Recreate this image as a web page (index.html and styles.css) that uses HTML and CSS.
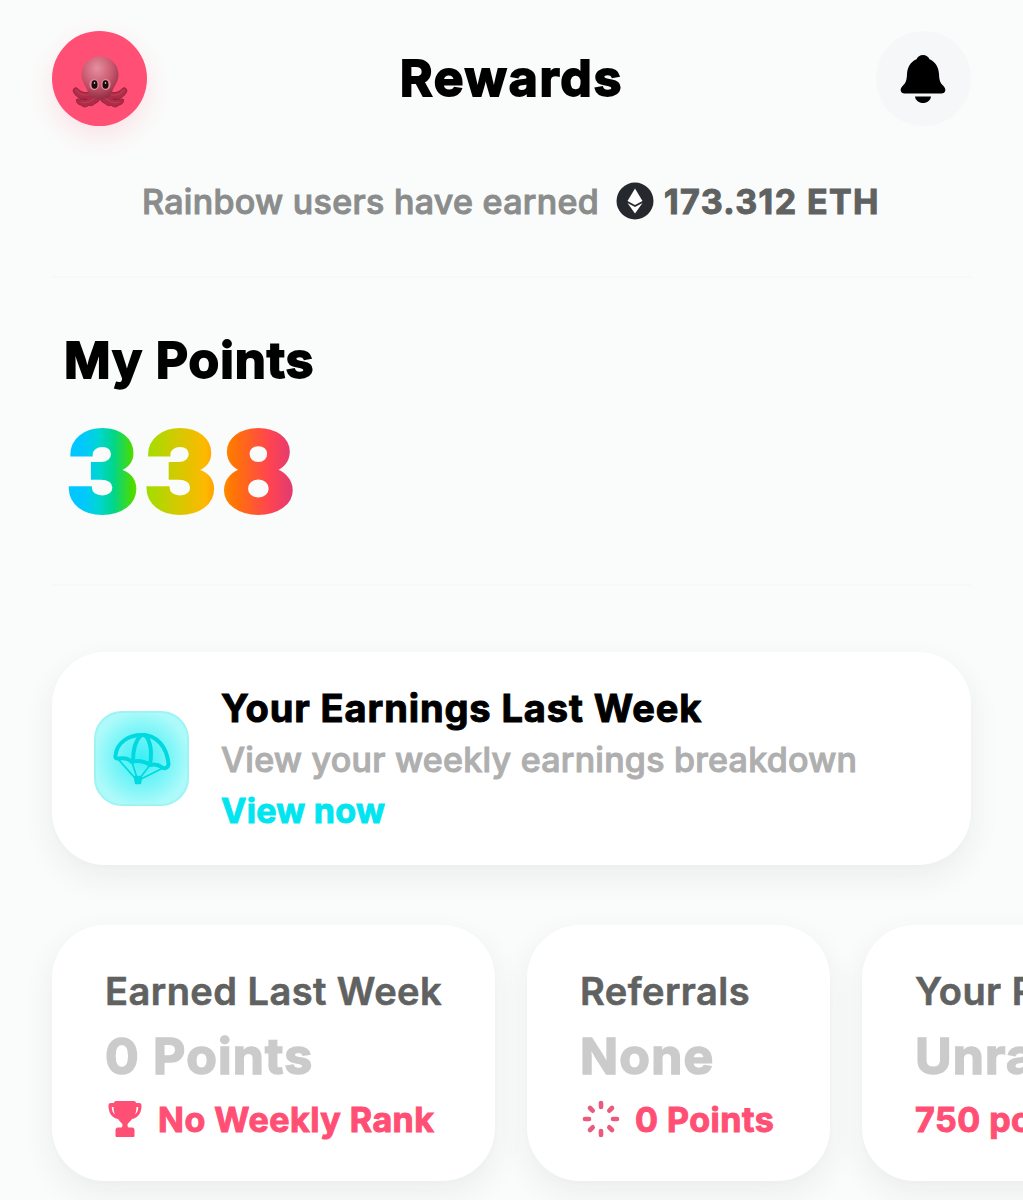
FILE: index.html
```html
<!DOCTYPE html>
<html lang="en">

<head>
    <meta charset="UTF-8">
    <meta name="viewport" content="width=device-width, initial-scale=1.0">
    <title>Rewards</title>
    <link rel="stylesheet" href="styles.css">
</head>

<body>
    <header class="header">
        <div class="avatar">
            <svg viewBox="0 0 56 52" width="56" height="52">
                <defs>
                    <radialGradient id="head" cx="0.42" cy="0.28" r="0.75">
                        <stop offset="0" stop-color="#e58fa0"></stop>
                        <stop offset="0.55" stop-color="#c9596f"></stop>
                        <stop offset="1" stop-color="#8f2b42"></stop>
                    </radialGradient>
                </defs>
                <g fill="#ad2c47" stroke="#8f2039" stroke-width="0.8" stroke-linejoin="round">
                    <path d="M20 34C14 39 9 36 5 32C2 31 0 34 2 37C5 42 10 44 15 43C12 44 8 43 5 43C3 45 6 49 9 49C12 52 15 51 17 49C20 51 22 48 24 47C27 46 28 43 28 40Z"></path>
                    <path d="M36 34C42 39 47 36 51 32C54 31 56 34 54 37C51 42 46 44 41 43C44 44 48 43 51 43C53 45 50 49 47 49C44 52 41 51 39 49C36 51 34 48 32 47C29 46 28 43 28 40Z"></path>
                </g>
                <g fill="none" stroke="#bd3b55" stroke-width="1.3" stroke-linecap="round">
                    <path d="M4 34C8 39 15 41 21 37M9 46C15 48 21 44 24 41"></path>
                    <path d="M52 34C48 39 41 41 35 37M47 46C41 48 35 44 32 41"></path>
                </g>
                <path d="M28 0.5C38 0.5 46.500 8 46.500 18.500C46.500 26 42 30 40 36C38 42 33 43 28 43C23 43 18 42 16 36C14 30 9.500 26 9.500 18.500C9.500 8 18 0.5 28 0.5Z" fill="url(#head)"></path>
                <ellipse cx="22.2" cy="28.5" rx="4.8" ry="5.8" fill="#dc8597"></ellipse>
                <ellipse cx="33.8" cy="28.5" rx="4.8" ry="5.8" fill="#dc8597"></ellipse>
                <ellipse cx="22.5" cy="28.5" rx="3" ry="4.3" fill="#1d0a0c"></ellipse>
                <ellipse cx="33.5" cy="28.5" rx="3" ry="4.3" fill="#1d0a0c"></ellipse>
                <circle cx="22.5" cy="27" r="0.8" fill="#fff"></circle>
                <circle cx="33.5" cy="27" r="0.8" fill="#fff"></circle>
            </svg>
        </div>
        <h1>Rewards</h1>
        <div class="bell">
            <svg viewBox="0 0 46 50" width="46" height="50">
                <path d="M23 1C26 1 28.5 2.7 29.5 5.3C35.5 8 38.5 13 39 20C39.3 27 40.5 29 43 31.5C45 33.5 45.5 35 45.3 36.5C45 38.5 43.5 39.5 41.5 39.5H4.5C2.5 39.5 1 38.5 0.7 36.5C0.5 35 1 33.5 3 31.5C5.5 29 6.7 27 7 20C7.5 13 10.5 8 16.5 5.3C17.5 2.7 20 1 23 1Z"></path>
                <path d="M15 42.5H31C30.5 46.5 27 49 23 49C19 49 15.5 46.5 15 42.5Z"></path>
            </svg>
        </div>
    </header>

    <div class="earned">
        <span class="earned-text">Rainbow users have earned</span>
        <svg class="eth" viewBox="0 0 38 38" width="38" height="38">
            <circle cx="19" cy="19" r="18.5" fill="#25292e"></circle>
            <path d="M19 6.5L26.5 19L19 23L11.5 19Z" fill="#fff"></path>
            <path d="M11.5 21L19 25L26.5 21L19 31.5Z" fill="#fff"></path>
        </svg>
        <span class="earned-amount">173.312 ETH</span>
    </div>

    <section class="points">
        <h2>My Points</h2>
        <div class="total">338</div>
    </section>

    <div class="card weekly">
        <div class="weekly-icon">
            <svg viewBox="0 0 58 54" width="58" height="54" fill="none" stroke="#00d9df" stroke-width="4" stroke-linecap="round" stroke-linejoin="round">
                <path d="M2.500 23C4 11 15 3 29 3C44 3 54 15 55.500 32C55 36 52 37 49 35.500C46 33 41 32 37 33C32 29 24 28 19 30C15 26 9 26 6 26.500C3 27 2 26 2.500 23Z"></path>
                <path d="M28 3C23 8 20 18 20 29"></path>
                <path d="M32 3C38 9 39 21 37 32"></path>
                <path d="M5 27L22 46M19 30L24 46M37 33L27 46M50 36L28 47" stroke-width="1.8"></path>
                <path d="M22 45H28L27 51H23Z" fill="#00d9df" stroke-width="2.5"></path>
            </svg>
        </div>
        <div class="weekly-text">
            <h3>Your Earnings Last Week</h3>
            <p>View your weekly earnings breakdown</p>
            <a href="#">View now</a>
        </div>
    </div>

    <div class="stats">
        <div class="card stat last-week">
            <div class="label">Earned Last Week</div>
            <div class="value">0 Points</div>
            <div class="note">
                <svg viewBox="0 0 36 38" width="36" height="38">
                    <path d="M9 1H27C28.5 1 29 2 29 3H32C34 3 34.500 4 34.500 6C34.500 13 31 18 25 19C23 22 20.5 23 20.5 25C20.5 27 21 27.5 23 27.5H25C26.5 27.5 27.500 28.5 27.500 30V35.5C27.500 36.5 27 37 26 37H10C9 37 8.500 36.5 8.500 35.5V30C8.500 28.5 9.5 27.5 11 27.5H13C15 27.5 15.5 27 15.5 25C15.5 23 13 22 11 19C5 18 1.500 13 1.500 6C1.500 4 2 3 4 3H7C7 2 7.5 1 9 1Z" fill="#ff4f74"></path>
                    <path d="M6.500 7H4.8C4.800 10.500 6 13 8 14.500C7 12 6.500 10 6.500 7ZM29.500 7H31.200C31.200 10.500 30 13 28 14.500C29 12 29.500 10 29.500 7Z" fill="#fff"></path>
                </svg>
                <span>No Weekly Rank</span>
            </div>
        </div>
        <div class="card stat referrals">
            <div class="label">Referrals</div>
            <div class="value">None</div>
            <div class="note">
                <svg viewBox="0 0 38 38" width="38" height="38" fill="none" stroke="#e95a7c" stroke-width="4.6" stroke-linecap="round">
                    <path d="M19 3V7M19 31V35M3 19H7M31 19H35M8 8L10.700 10.700M27.300 27.300L30 30M8 30L10.700 27.300M27.300 10.700L30 8"></path>
                </svg>
                <span>0 Points</span>
            </div>
        </div>
        <div class="card stat rank">
            <div class="label">Your Rank</div>
            <div class="value">Unranked</div>
            <div class="note"><span>750 points to rank</span></div>
        </div>
    </div>
</body>

</html>
```
FILE: styles.css
```css
* {
    box-sizing: border-box;
}

body {
    font-family: Inter, "Liberation Sans", sans-serif;
    margin: 0;
    padding: 31px 52px 0;
    height: 1200px;
    overflow: hidden;
    background-color: #fafcfb;
    color: #000;
    -webkit-text-stroke: 1px;
}

h1,
h2,
h3,
p {
    margin: 0;
}

svg {
    display: block;
    flex-shrink: 0;
}

.header {
    display: flex;
    justify-content: space-between;
    align-items: center;
    height: 95px;
}

.avatar,
.bell {
    width: 95px;
    height: 95px;
    border-radius: 50%;
    display: flex;
    justify-content: center;
    align-items: center;
}

.avatar {
    background: #ff4f74;
    box-shadow: 0 10px 28px rgba(255, 79, 116, 0.16);
    padding-top: 6px;
}

.bell {
    background: #f6f7f9;
    padding-right: 2px;
}

h1,
h2 {
    font-size: 50px;
    font-weight: 700;
    line-height: 60px;
    letter-spacing: 0.9px;
    -webkit-text-stroke: 1.8px;
}

h1 {
    letter-spacing: 1.7px;
    padding-bottom: 2px;
}

.earned {
    display: flex;
    align-items: center;
    height: 152px;
    padding-left: 90px;
    border-bottom: 2px solid #f7f9f9;
    font-size: 34px;
    line-height: 40px;
    white-space: nowrap;
}

.earned-text {
    color: #8b8c8c;
    font-weight: 500;
    width: 457px;
    letter-spacing: 0.3px;
    padding-top: 1px;
}

.eth {
    margin: 0 10px 0 17px;
}

.earned-amount {
    color: #606161;
    font-weight: 700;
    letter-spacing: 1.4px;
    padding-top: 1px;
}

.points {
    height: 308px;
    padding: 52px 12px 0;
    border-bottom: 2px solid #f7f9f9;
}

.total {
    width: 236px;
    padding-left: 2px;
    font-size: 111px;
    font-weight: 800;
    line-height: 140px;
    letter-spacing: 4.8px;
    -webkit-text-stroke: 4px transparent;
    margin-top: 12px;
    background: linear-gradient(to right, #00c8ff 8%, #00d6d0 15%, #00d68a 21%, #4bdb00 29%, #a6dc00 36%, #ffb800 60%, #ff7800 71%, #ff4450 87%, #d8377c 100%);
    -webkit-background-clip: text;
    background-clip: text;
    color: transparent;
}

.card {
    background: #fff;
    border-radius: 53px;
    box-shadow: 0 12px 32px rgba(37, 41, 66, 0.07), 0 2px 8px rgba(37, 41, 46, 0.01);
}

.weekly {
    display: flex;
    align-items: center;
    height: 213px;
    margin-top: 66px;
    padding: 0 42px;
}

.weekly-icon {
    display: flex;
    align-items: center;
    justify-content: center;
    width: 95px;
    height: 95px;
    margin-right: 32px;
    border: 2px solid #9ef3f3;
    border-radius: 28px;
    background: radial-gradient(circle, #3beff5 0%, #77f5f8 42%, #aefafa 75%);
}

.weekly-text {
    white-space: nowrap;
    line-height: 51px;
    padding-top: 2px;
    font-size: 34px;
}

h3 {
    font-size: 38px;
    font-weight: 700;
    letter-spacing: 0.9px;
}

.weekly-text p {
    color: #afafaf;
    font-weight: 500;
    letter-spacing: 0.25px;
}

.weekly-text a {
    display: block;
    color: #00e5f0;
    font-weight: 700;
    letter-spacing: 0.3px;
    text-decoration: none;
}

.stats {
    display: flex;
    gap: 32px;
    margin-top: 60px;
}

.stat {
    flex-shrink: 0;
    height: 256px;
    padding: 41px 53px 0;
    white-space: nowrap;
}

.last-week {
    width: 443px;
}

.referrals {
    width: 303px;
}

.rank {
    width: 443px;
}

.label {
    color: #606161;
    font-size: 38px;
    font-weight: 600;
    line-height: 51px;
    letter-spacing: 0.45px;
    -webkit-text-stroke: 0.6px;
}

.value {
    color: #cbcbcb;
    font-size: 50px;
    font-weight: 700;
    line-height: 66px;
    letter-spacing: 1.2px;
    -webkit-text-stroke: 1.6px;
    margin-top: 6px;
}

.note {
    display: flex;
    align-items: center;
    height: 60px;
    color: #ff4f74;
    font-size: 34px;
    font-weight: 700;
    letter-spacing: 0.5px;
}

.note svg {
    margin: 0 15px 0 2px;
}
```
